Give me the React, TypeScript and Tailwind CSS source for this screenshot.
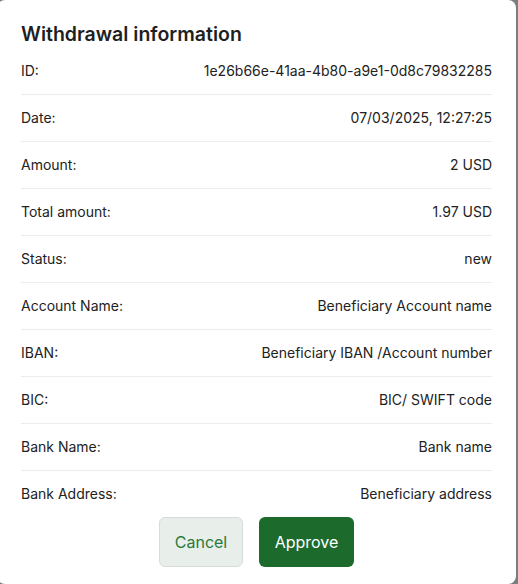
import React from "react";

const rows: [string, string][] = [
  ["ID:", "1e26b66e-41aa-4b80-a9e1-0d8c79832285"],
  ["Date:", "07/03/2025, 12:27:25"],
  ["Amount:", "2 USD"],
  ["Total amount:", "1.97 USD"],
  ["Status:", "new"],
  ["Account Name:", "Beneficiary Account name"],
  ["IBAN:", "Beneficiary IBAN /Account number"],
  ["BIC:", "BIC/ SWIFT code"],
  ["Bank Name:", "Bank name"],
  ["Bank Address:", "Beneficiary address"],
];

export default function App() {
  return (
    <div
      className="w-[518px] h-[584px] overflow-hidden bg-[#7d7d7d]"
      style={{ fontFamily: "Inter, 'Noto Sans', sans-serif" }}
    >
      <div className="ml-[-3px] w-[519px] h-[584px] bg-white rounded-[8px] px-6 pt-5 flex flex-col">
        <h2 className="text-[19.5px] leading-[28px] font-semibold text-[#1f1f1f]">
          Withdrawal information
        </h2>
        <div className="flex flex-col">
          {rows.map(([k, v], i) => (
            <div
              key={k}
              className={`h-[47px] pb-[2px] flex items-center justify-between text-[14px] text-[#222] ${
                i < rows.length - 1 ? "border-b border-[#ececec]" : ""
              }`}
            >
              <span>{k}</span>
              <span>{v}</span>
            </div>
          ))}
        </div>
        <div className="-mt-px flex justify-center gap-4">
          <button className="h-[50px] w-[84px] rounded-[6px] border border-[#d6dcd7] bg-[#e8efea] text-[16px] text-[#2b7a3b]">
            Cancel
          </button>
          <button className="h-[50px] w-[95px] rounded-[6px] bg-[#1c6b2d] text-[16px] text-white">
            Approve
          </button>
        </div>
      </div>
    </div>
  );
}
